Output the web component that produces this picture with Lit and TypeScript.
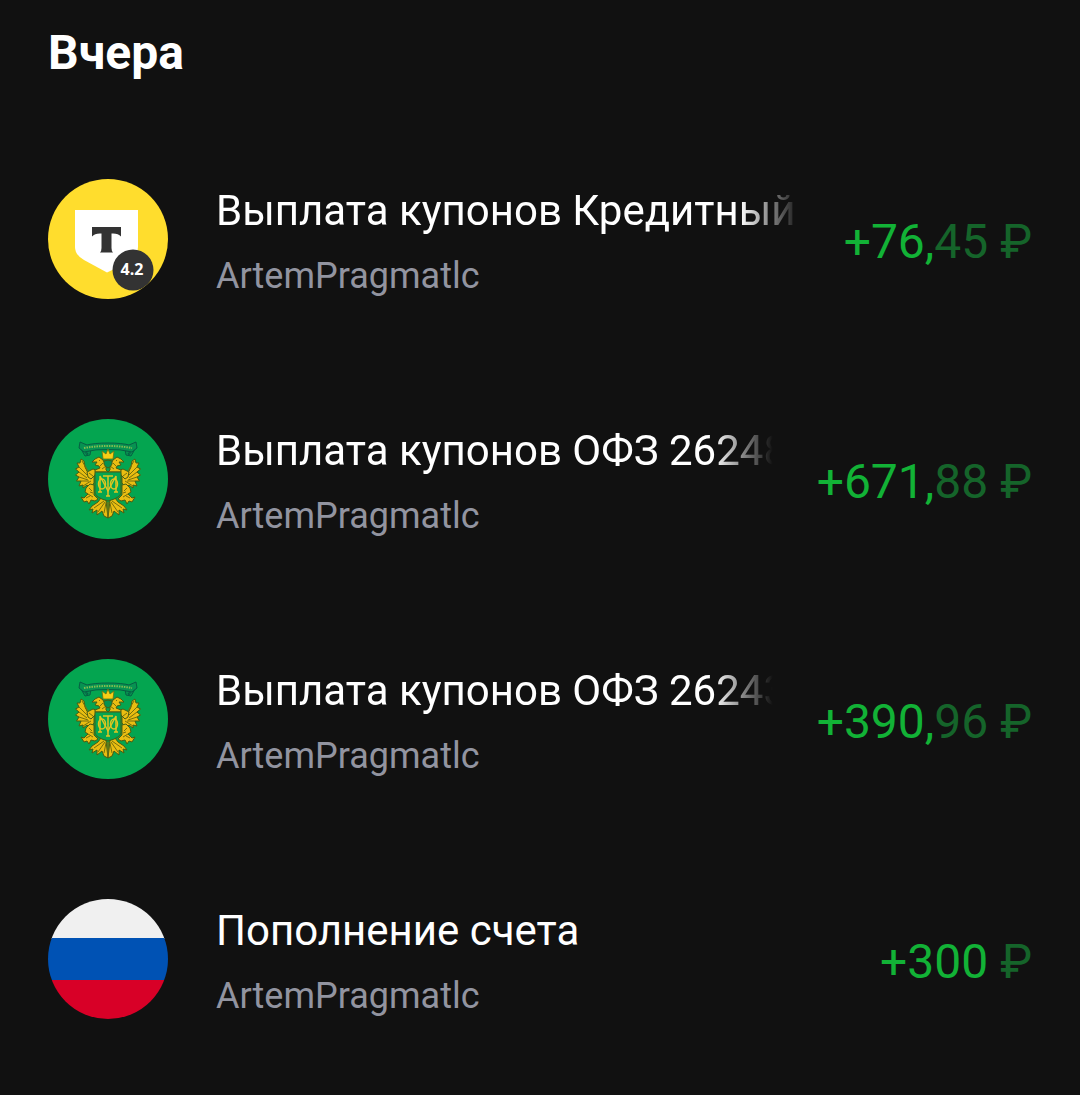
import { LitElement, html, svg, css, nothing } from "lit";
import { customElement, property, state } from "lit/decorators.js";

type LogoKind = "fund" | "treasury" | "rub";

interface Operation {
  title: string;
  account: string;
  logo: LogoKind;
  whole: string;
  fraction?: string;
}

// Left half of the eagle, the right one is mirrored around x = 60
const eagleHalf = () => svg`
  <g class="ribbon">
    <path d="M33 30 L37 37 L42 36 L43 30 Z" />
    <path d="M60 24 Q46 24 39 26 L32 23 L31 29 L36 33 Q48 30 60 30.500" />
    <path d="M37 34 q3 -1 3 1 q-1 1 -2 0" />
  </g>
  <g class="gold">
    <path d="M40 54 Q36 48 36 42 L33 40 L32 44 L29 44 L31 48 L27.500 50 L31 53 L27.500 56 L31 58 L28.500 62 L33 62 L31 67 L35 66 L35 69 L39 66 L42 69 L46 64 L46 55 Z" />
    <path d="M39 53 L45 50 L48 51 L47 56 L43 60 L40 58 Z" />
    <path d="M58 51 L58 46 L55 41 L51 38 L47 40 L44 43 L49 43 L47 46 L51 47 L52 49 L47 51 L47 53 L60 53 Z" />
    <path d="M46 66 L42 65 L38 69 L37 73 L40 75 L36 79 L33 78 L36 83 L39 82 L41 85 L43 81 L47 82 L50 80 L46 76 Z" />
    <path d="M58 81 L53 79 L50 83 L44 87 L41 91 L45 90 L44 94 L49 91 L49 96 L54 92 L56 97 L60 99 Z" />
  </g>
  <g class="engraving">
    <path d="M31 48 L39 56 M31 53 L39 59 M31 58 L40 61 M33 62 L41 62 M35 67 L43 62 M34 42 L40 52" />
    <path d="M41 54 l4 3 M51 41 l1 1 M55 44 l-3 3 M54 50 l4 -3" />
    <path d="M41 69 l3 3 M40 75 l5 3 M38 79 l4 -2 M45 74 l-3 -1" />
    <path d="M56 82 L46 89 M57 83 L50 93 M58 84 L56 94 M60 83 V98" />
  </g>
`;

@customElement("op-logo")
export class OpLogo extends LitElement {
  @property() public kind: LogoKind = "rub";

  static styles = css`
    :host {
      display: block;
      width: 120px;
      height: 120px;
      border-radius: 50%;
      overflow: hidden;
    }

    svg {
      display: block;
      width: 100%;
      height: 100%;
    }

    .badge-text {
      font: 700 16px "Open Sans", "Noto Sans", sans-serif;
      fill: #fff;
      text-anchor: middle;
    }

    .gold {
      fill: #e9bd12;
      stroke: #4a5d12;
      stroke-width: 1;
      stroke-linejoin: round;
    }

    .engraving {
      fill: none;
      stroke: #76700c;
      stroke-width: 1;
    }

    .ribbon {
      fill: #079251;
      stroke: #075f43;
      stroke-width: 1;
    }

    .monogram {
      fill: none;
      stroke: #dec620;
      stroke-width: 1.5;
    }
  `;

  render() {
    return html`
      <svg viewBox="0 0 120 120" aria-hidden="true">
        ${this.kind === "fund"
          ? this._renderFund()
          : this.kind === "treasury"
            ? this._renderTreasury()
            : this._renderFlag()}
      </svg>
    `;
  }

  private _renderFund() {
    return svg`
      <rect width="120" height="120" fill="#ffdd2d" />
      <path d="M27 31 H90 V68 Q90 78 81 83 L59 93.500 L36 81 Q27 76 27 68 Z" fill="#fff" />
      <path
        d="M44 48 H73 V57.500 Q70 54 63.500 54.500 V69 Q63.500 72 65 73.500 H52 Q53.500 72 53.500 69 V54.500 Q47 54 44 57.500 Z"
        fill="#333"
      />
      <circle cx="85" cy="91" r="20.500" fill="#333" />
      <text class="badge-text" x="84" y="96">4.2</text>
    `;
  }

  private _renderTreasury() {
    return svg`
      <rect width="120" height="120" fill="#04a550" />
      ${eagleHalf()}
      <g transform="matrix(-1 0 0 1 120 0)">${eagleHalf()}</g>
      <path d="M36 29 Q60 25 84 29" fill="none" stroke="#83bd50" stroke-width="2" stroke-dasharray="1.500 1" />
      <path d="M55 40 L54 32 L58 35 L60 30 L62 35 L66 32 L65 40 Z" fill="#f7cf16" stroke="#6a7110" stroke-width="0.800" />
      <path d="M56 42 Q60 40 64 42 V45 Q63 48 60 49 Q57 48 56 45 Z" fill="#079251" stroke="#4a5d12" />
      <path d="M47 53 H73 V74 Q72 79 60 82 Q48 79 47 74 Z" fill="#04a550" stroke="#4a5d12" />
      <g class="monogram">
        <path d="M52 73 V57 L60 72 L68 57 V73 M50 73 H54 M66 73 H70" />
        <path d="M60 57 V77 M55 57 H65 M58 77 H62" />
        <ellipse cx="54" cy="65" rx="3.500" ry="5" />
        <ellipse cx="66" cy="65" rx="3.500" ry="5" />
      </g>
    `;
  }

  private _renderFlag() {
    return svg`
      <rect width="120" height="40" fill="#f0f0f0" />
      <rect y="39" width="120" height="42" fill="#0052b4" />
      <rect y="81" width="120" height="39" fill="#d80027" />
    `;
  }
}

@customElement("op-row")
export class OpRow extends LitElement {
  @property({ type: Object }) public operation!: Operation;

  static styles = css`
    :host {
      display: flex;
      align-items: flex-start;
      padding: 60px 48px 54px;
    }

    op-logo {
      flex: none;
      margin-right: 48px;
    }

    .info {
      flex: 1;
      min-width: 0;
    }

    .title {
      margin-bottom: 4px;
      font-size: 42px;
      line-height: 64px;
      white-space: nowrap;
      overflow: hidden;
    }

    .title.faded {
      -webkit-mask-image: linear-gradient(to left, transparent, #000 60px);
      mask-image: linear-gradient(to left, transparent, #000 60px);
    }

    .account {
      font-size: 36px;
      line-height: 58px;
      color: #9294a0;
      white-space: nowrap;
    }

    .amount {
      flex: none;
      align-self: center;
      margin-left: 44px;
      font-size: 48px;
      line-height: 64px;
      color: #12b236;
      white-space: nowrap;
    }

    .minor {
      color: #15642a;
    }
  `;

  render() {
    const { title, account, logo, whole, fraction } = this.operation;
    return html`
      <op-logo kind=${logo}></op-logo>
      <div class="info">
        <div class="title ${fraction ? "faded" : ""}">${title}</div>
        <div class="account">${account}</div>
      </div>
      <div class="amount">
        ${whole}${fraction
          ? html`,<span class="minor">${fraction}</span>`
          : nothing}<span class="minor">&nbsp;₽</span>
      </div>
    `;
  }
}

@customElement("app-root")
export class AppRoot extends LitElement {
  @state() private _operations: Operation[] = [
    {
      title: "Выплата купонов Кредитный",
      account: "ArtemPragmatlc",
      logo: "fund",
      whole: "+76",
      fraction: "45",
    },
    {
      title: "Выплата купонов ОФЗ 26248",
      account: "ArtemPragmatlc",
      logo: "treasury",
      whole: "+671",
      fraction: "88",
    },
    {
      title: "Выплата купонов ОФЗ 26243",
      account: "ArtemPragmatlc",
      logo: "treasury",
      whole: "+390",
      fraction: "96",
    },
    {
      title: "Пополнение счета",
      account: "ArtemPragmatlc",
      logo: "rub",
      whole: "+300",
    },
  ];

  static styles = css`
    :host {
      display: block;
      box-sizing: border-box;
      min-height: 100vh;
      background: #111;
      color: #fff;
      font-family: Roboto, "Noto Sans", sans-serif;
    }

    h2 {
      margin: 0;
      padding: 21px 48px 34px;
      font-size: 48px;
      font-weight: 700;
      line-height: 64px;
    }

    ul {
      margin: 0;
      padding: 0;
      list-style: none;
    }
  `;

  render() {
    return html`
      <section>
        <h2>Вчера</h2>
        <ul>
          ${this._operations.map(
            (operation) => html`
              <li><op-row .operation=${operation}></op-row></li>
            `
          )}
        </ul>
      </section>
    `;
  }
}

declare global {
  interface HTMLElementTagNameMap {
    "op-logo": OpLogo;
    "op-row": OpRow;
    "app-root": AppRoot;
  }
}
